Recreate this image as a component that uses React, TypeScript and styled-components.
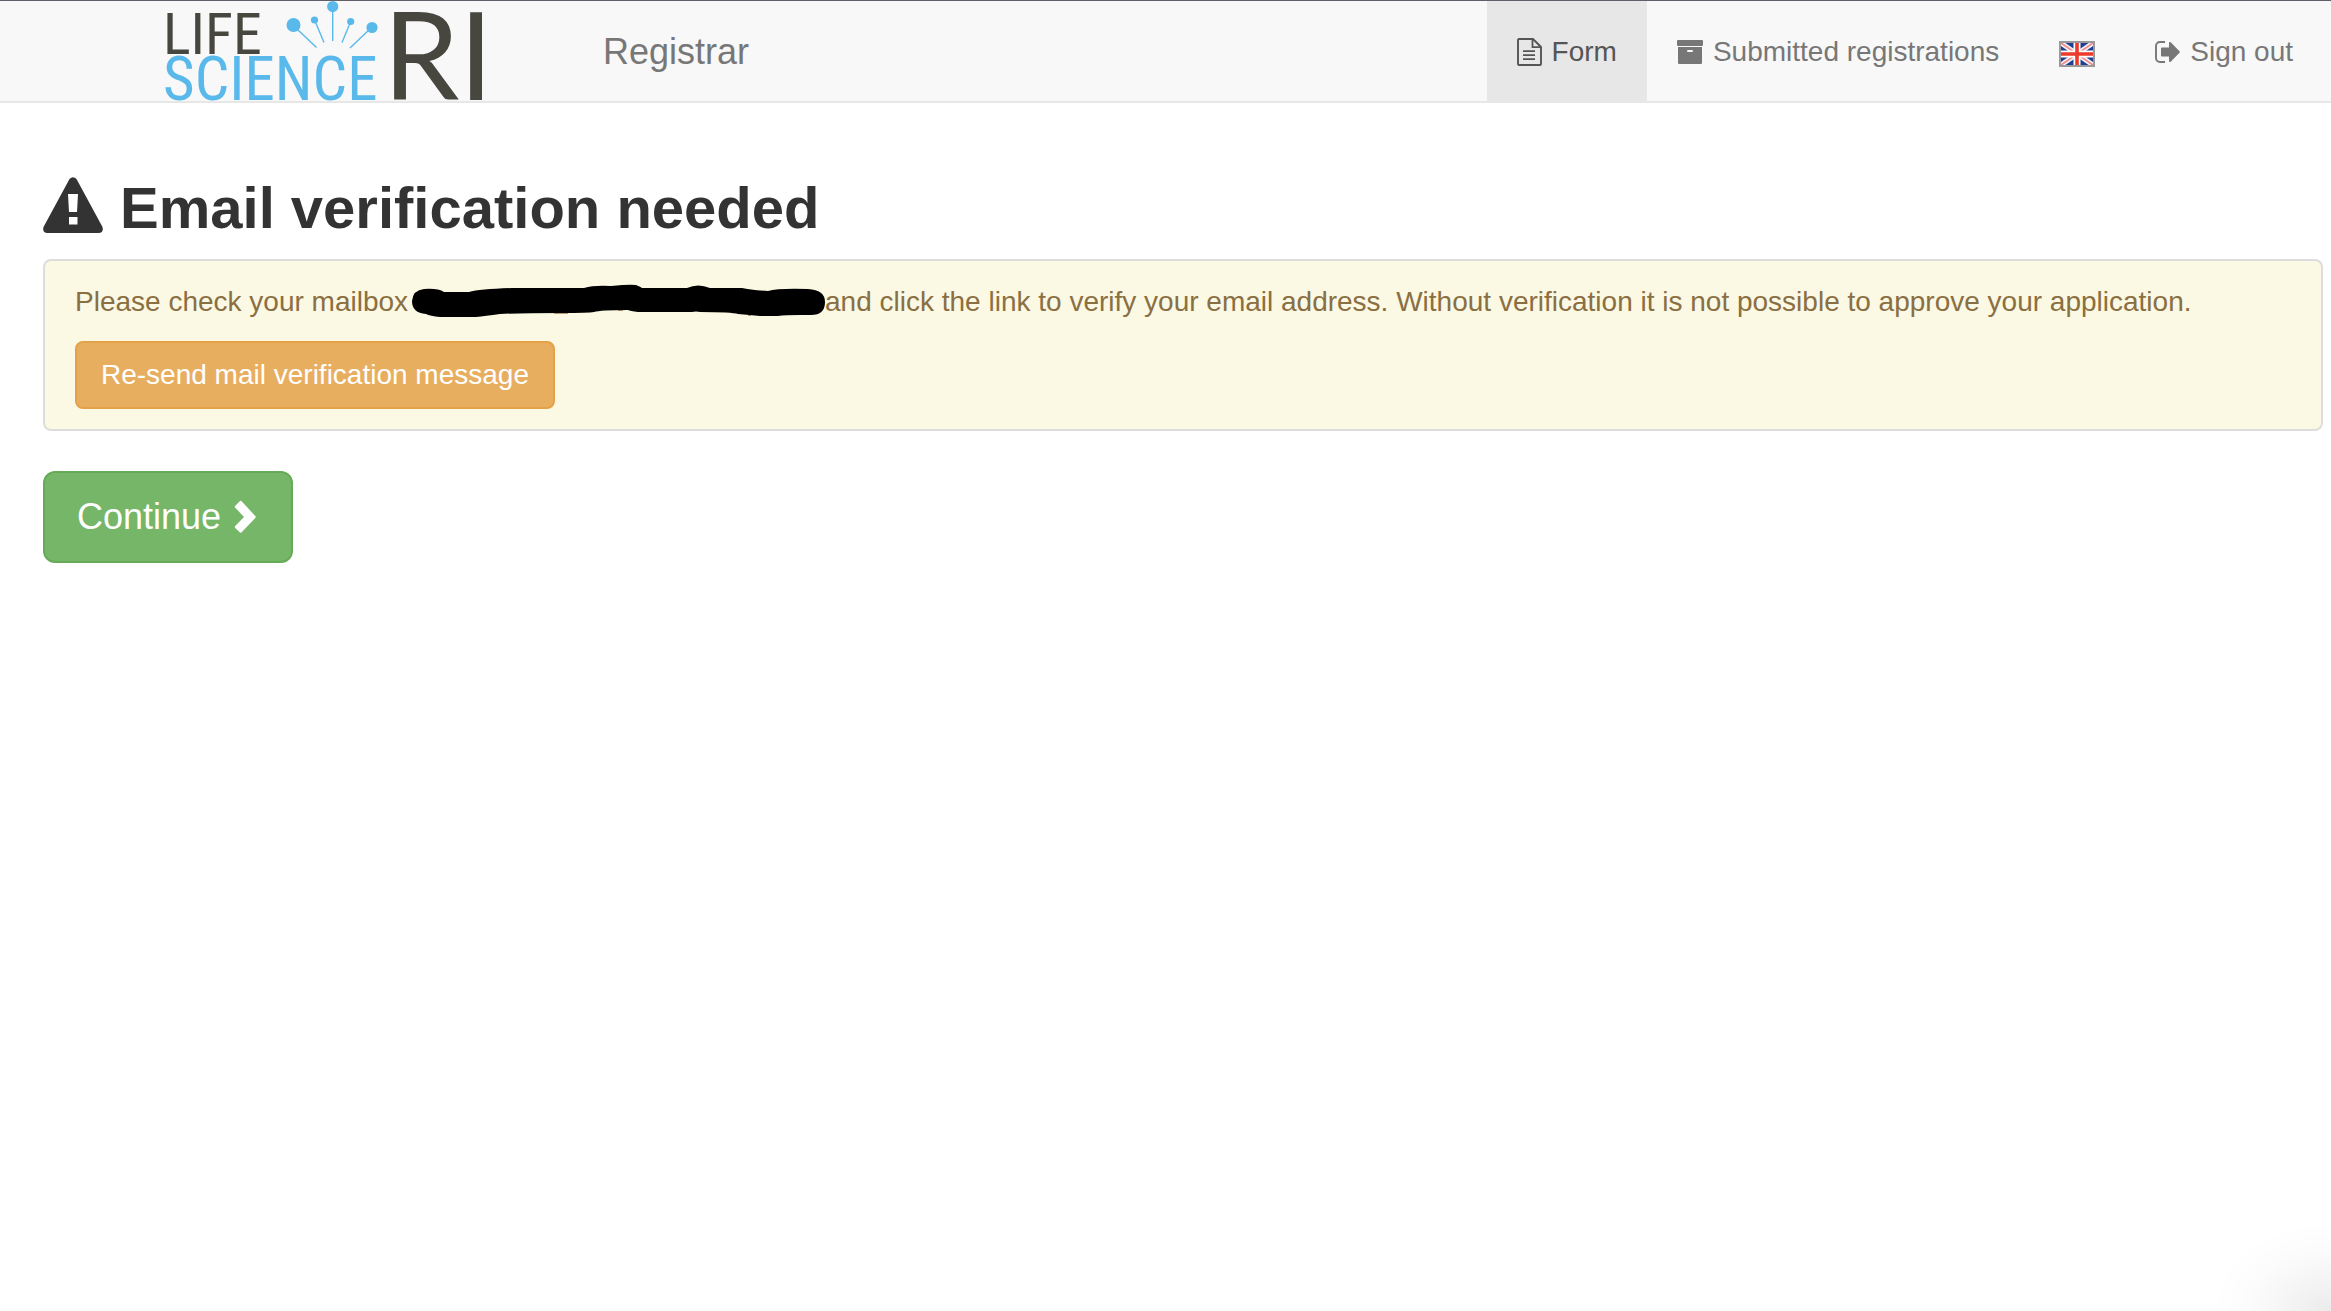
import React from "react";
import styled, { createGlobalStyle } from "styled-components";

const GlobalStyle = createGlobalStyle`
  *, *::before, *::after { box-sizing: border-box; }
  body {
    margin: 0;
    background: #fff;
    color: #333;
    font-family: "Liberation Sans", Arial, sans-serif;
    font-size: 28px;
    line-height: 40px;
  }
`;

const Navbar = styled.header`
  display: flex;
  flex-wrap: wrap;
  justify-content: space-between;
  padding: 0 8px 0 165px;
  background: #f8f8f8;
  border-top: 1px solid #625e68;
  border-bottom: 2px solid #e7e7e7;
`;

const BrandGroup = styled.div`
  display: flex;
  align-items: center;
  gap: 122px;
`;

const LogoLink = styled.a`
  display: block;
  svg { display: block; overflow: visible; }
`;

const BrandLink = styled.a`
  padding-top: 2px;
  color: #777;
  font-size: 36px;
  text-decoration: none;
`;

const NavList = styled.ul`
  display: flex;
  margin: 0;
  padding: 0;
  list-style: none;
`;

const NavLink = styled.a<{ $active?: boolean }>`
  display: flex;
  align-items: center;
  height: 100%;
  gap: 10px;
  padding: 31px 30px 29px;
  color: ${(p) => (p.$active ? "#555" : "#777")};
  background: ${(p) => (p.$active ? "#e7e7e7" : "transparent")};
  text-decoration: none;
  white-space: nowrap;
`;

const Main = styled.main`
  padding: 70px 8px 40px 43px;
`;

const Heading = styled.h2`
  display: flex;
  align-items: center;
  gap: 17px;
  margin: 0 0 16px;
  font-size: 58px;
  font-weight: 700;
  line-height: 70px;
  svg {
    flex: none;
    align-self: flex-start;
    margin-top: 4px;
  }
`;

const Alert = styled.section`
  margin-bottom: 40px;
  padding: 21px 30px 20px;
  color: #8a6f42;
  background: #fbf8e4;
  border: 2px solid #ddd;
  border-radius: 8px;
`;

const Message = styled.p`
  margin: 0 0 19px;
`;

const Redaction = styled.svg`
  margin-left: 4px;
  vertical-align: -7px;
`;

const Button = styled.button<{ $kind: "warning" | "success" }>`
  display: inline-flex;
  align-items: center;
  gap: 12px;
  color: #fff;
  font-family: inherit;
  font-size: ${(p) => (p.$kind === "success" ? "36px" : "28px")};
  line-height: ${(p) => (p.$kind === "success" ? "48px" : "40px")};
  padding: ${(p) => (p.$kind === "success" ? "20px 32px" : "12px 24px")};
  background: ${(p) => (p.$kind === "success" ? "#76b668" : "#e8ae60")};
  border: 2px solid ${(p) => (p.$kind === "success" ? "#67ab58" : "#e3a148")};
  border-radius: ${(p) => (p.$kind === "success" ? "12px" : "8px")};
  cursor: pointer;
`;

const CornerShade = styled.div`
  position: fixed;
  right: 0;
  bottom: 0;
  width: 120px;
  height: 90px;
  pointer-events: none;
  background: radial-gradient(
    ellipse farthest-side at 100% 100%,
    rgba(0, 0, 0, 0.08),
    rgba(0, 0, 0, 0.045) 35%,
    rgba(0, 0, 0, 0.01) 70%,
    transparent
  );
`;

const LogoText = styled.text<{ $size: number; $family: string }>`
  font-family: ${(p) => p.$family};
  font-size: ${(p) => p.$size}px;
`;

const NARROW = '"Liberation Sans Narrow", "Roboto Condensed", Lato, sans-serif';
const WIDE = "Lato, sans-serif";

function Logo() {
  return (
    <svg width="316" height="100" viewBox="165 1 316 100" role="img" aria-label="Life Science RI">
      <LogoText $size={58} $family={NARROW} x="163" y="54" fill="#474740">LIFE</LogoText>
      <LogoText $size={61} $family={NARROW} x="163" y="100" fill="#59b9eb">SCIENCE</LogoText>
      <LogoText $size={122} $family={WIDE} x="383" y="100" fill="#474740">R</LogoText>
      <LogoText $size={122} $family={WIDE} x="459" y="100" fill="#474740">I</LogoText>
      <g fill="#59b9eb">
        <circle cx="293.5" cy="25" r="7" />
        <circle cx="314.5" cy="20" r="3.6" />
        <circle cx="332.7" cy="6.5" r="5.6" />
        <circle cx="350.7" cy="21.5" r="3.6" />
        <circle cx="372" cy="27.5" r="5.6" />
      </g>
      <path
        d="M297 29 316.500 47.500M315 21 324 42.500M332.700 6V41M350.500 22 342 42.500M371 28 350 48"
        stroke="#59b9eb"
        strokeWidth="1.4"
        fill="none"
      />
    </svg>
  );
}

function FileIcon() {
  return (
    <svg width="25" height="28" viewBox="0 0 25 28" fill="none" stroke="currentColor" aria-hidden="true">
      <path d="M2 1H16L24 9V26a1 1 0 0 1-1 1H2a1 1 0 0 1-1-1V2a1 1 0 0 1 1-1Z" strokeWidth="1.900" />
      <path d="M15.500 1V9.200H24M6 13.200H18M6 17.200H18M6 21.200H18" strokeWidth="1.800" />
    </svg>
  );
}

function ArchiveIcon() {
  return (
    <svg width="26" height="24" viewBox="0 0 26 24" fill="currentColor" aria-hidden="true">
      <rect width="26" height="6" rx="1" />
      <path
        fillRule="evenodd"
        d="M1 7H25V23a1 1 0 0 1-1 1H2a1 1 0 0 1-1-1ZM11 10a1 1 0 0 0 0 2H15a1 1 0 0 0 0-2Z"
      />
    </svg>
  );
}

function FlagIcon() {
  return (
    <svg width="36" height="30" viewBox="0 -4 36 30" role="img" aria-label="English">
      <rect width="36" height="26" fill="#999" />
      <svg x="2" y="2" width="32" height="22" viewBox="0 0 32 22">
        <rect width="32" height="22" fill="#203f91" />
        <path d="M0 0 32 22M32 0 0 22" stroke="#f4f1f6" strokeWidth="5" />
        <path d="M0 0 32 22M32 0 0 22" stroke="#ef8b86" strokeWidth="1.800" />
        <path d="M16 0V22M0 11H32" stroke="#fff" strokeWidth="7" />
        <path d="M16 0V22M0 11H32" stroke="#ec3a2d" strokeWidth="3.600" />
      </svg>
    </svg>
  );
}

function SignOutIcon() {
  return (
    <svg width="25" height="22" viewBox="0 0 25 22" fill="currentColor" aria-hidden="true">
      <path d="M10 1H5a4 4 0 0 0-4 4V17a4 4 0 0 0 4 4h5" fill="none" stroke="currentColor" strokeWidth="1.900" />
      <path d="M7 6.500H14V2a1 1 0 0 1 1.700-.7L24.500 10.300a1 1 0 0 1 0 1.400L15.700 20.700A1 1 0 0 1 14 20V15.500H7a1 1 0 0 1-1-1v-7a1 1 0 0 1 1-1Z" />
    </svg>
  );
}

function WarningIcon() {
  return (
    <svg width="60" height="56" viewBox="0 0 60 56" aria-hidden="true">
      <path
        fill="#333"
        fillRule="evenodd"
        d="M26.500 2Q30-1.500 33.500 2L59.500 50Q61 56 55.500 56H4.500Q-1 56 .5 50ZM25 17 26 35H34L35 17ZM26 40V47.500H34.500V40Z"
      />
    </svg>
  );
}

function ChevronIcon() {
  return (
    <svg width="26" height="34" viewBox="0 0 26 34" aria-hidden="true">
      <path d="M2 6 7 1Q7.700.5 8.400 1L22.500 16.300Q23 17 22.500 17.700L8.400 32.500Q7.700 33 7 32.500L2 27.700Q1.500 27 2 26.300L11 17 2 7.400Q1.500 6.700 2 6Z" fill="#fff" />
    </svg>
  );
}

function HiddenAddress() {
  return (
    <Redaction width="413" height="34" viewBox="412 284 413 34" role="img" aria-label="Hidden address">
      <path d="M554 311h14v3h-14ZM748 313h3v3h-3ZM764 314h10v2h-10ZM618 308h5v3h-5Z" fill="#b59a6a" />
      <path d="M424 289Q438 288 444 292H469Q480 289 512 288H584Q594 285 611 286Q630 284 636 285Q641 287 642 288H687Q698 283 710 288H742Q750 290 768 291Q778 288 808 289Q825 290 825 302Q825 315 811 315H800Q785 315 778 316H760Q750 315 738 314Q732 312 700 312Q696 311 692 312H638Q630 311 628 310Q600 310 594 312Q588 313 562 313Q520 313 500 314Q485 316 476 317H440Q430 316 426 314Q412 313 412 301Q413 290 424 289Z" />
    </Redaction>
  );
}

export default function App() {
  return (
    <>
      <GlobalStyle />
      <Navbar>
        <BrandGroup>
          <LogoLink href="#home"><Logo /></LogoLink>
          <BrandLink href="#registrar">Registrar</BrandLink>
        </BrandGroup>
        <nav>
          <NavList>
            <li><NavLink href="#form" $active aria-current="page"><FileIcon />Form</NavLink></li>
            <li><NavLink href="#submitted"><ArchiveIcon />Submitted registrations</NavLink></li>
            <li><NavLink href="#language"><FlagIcon /></NavLink></li>
            <li><NavLink href="#signout"><SignOutIcon />Sign out</NavLink></li>
          </NavList>
        </nav>
      </Navbar>
      <Main>
        <Heading><WarningIcon />Email verification needed</Heading>
        <Alert>
          <Message>
            Please check your mailbox<HiddenAddress />and click the link to verify your email address. Without
            verification it is not possible to approve your application.
          </Message>
          <Button type="button" $kind="warning">Re-send mail verification message</Button>
        </Alert>
        <Button type="button" $kind="success">Continue<ChevronIcon /></Button>
      </Main>
      <CornerShade />
    </>
  );
}
